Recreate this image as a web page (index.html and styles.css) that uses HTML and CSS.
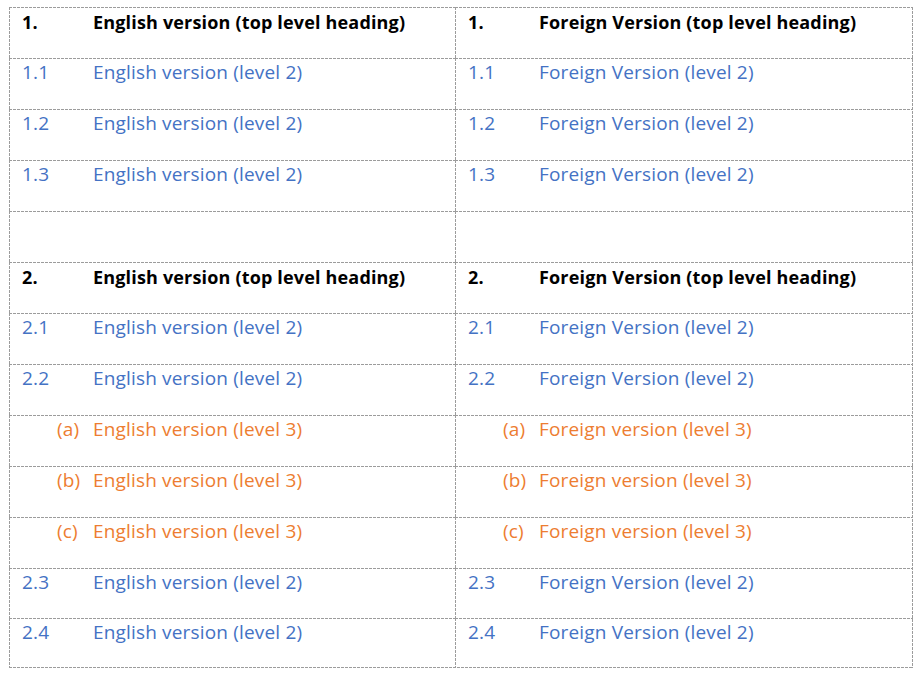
FILE: index.html
```html
<!DOCTYPE html>
<html>
<head>
<meta charset="utf-8">
<link rel="stylesheet" href="styles.css">
</head>
<body>
<table class="doc">
  <colgroup>
    <col class="col-en">
    <col class="col-fr">
  </colgroup>
  <tr class="h1">
    <td><div class="item"><span class="num">1.</span><span class="txt">English version (top level heading)</span></div></td>
    <td><div class="item"><span class="num">1.</span><span class="txt">Foreign Version (top level heading)</span></div></td>
  </tr>
  <tr class="l2">
    <td><div class="item"><span class="num">1.1</span><span class="txt">English version (level 2)</span></div></td>
    <td><div class="item"><span class="num">1.1</span><span class="txt">Foreign Version (level 2)</span></div></td>
  </tr>
  <tr class="l2">
    <td><div class="item"><span class="num">1.2</span><span class="txt">English version (level 2)</span></div></td>
    <td><div class="item"><span class="num">1.2</span><span class="txt">Foreign Version (level 2)</span></div></td>
  </tr>
  <tr class="l2">
    <td><div class="item"><span class="num">1.3</span><span class="txt">English version (level 2)</span></div></td>
    <td><div class="item"><span class="num">1.3</span><span class="txt">Foreign Version (level 2)</span></div></td>
  </tr>
  <tr class="blank">
    <td></td>
    <td></td>
  </tr>
  <tr class="h1">
    <td><div class="item"><span class="num">2.</span><span class="txt">English version (top level heading)</span></div></td>
    <td><div class="item"><span class="num">2.</span><span class="txt">Foreign Version (top level heading)</span></div></td>
  </tr>
  <tr class="l2">
    <td><div class="item"><span class="num">2.1</span><span class="txt">English version (level 2)</span></div></td>
    <td><div class="item"><span class="num">2.1</span><span class="txt">Foreign Version (level 2)</span></div></td>
  </tr>
  <tr class="l2">
    <td><div class="item"><span class="num">2.2</span><span class="txt">English version (level 2)</span></div></td>
    <td><div class="item"><span class="num">2.2</span><span class="txt">Foreign Version (level 2)</span></div></td>
  </tr>
  <tr class="l3">
    <td><div class="item"><span class="num">(a)</span><span class="txt">English version (level 3)</span></div></td>
    <td><div class="item"><span class="num">(a)</span><span class="txt">Foreign version (level 3)</span></div></td>
  </tr>
  <tr class="l3">
    <td><div class="item"><span class="num">(b)</span><span class="txt">English version (level 3)</span></div></td>
    <td><div class="item"><span class="num">(b)</span><span class="txt">Foreign version (level 3)</span></div></td>
  </tr>
  <tr class="l3">
    <td><div class="item"><span class="num">(c)</span><span class="txt">English version (level 3)</span></div></td>
    <td><div class="item"><span class="num">(c)</span><span class="txt">Foreign version (level 3)</span></div></td>
  </tr>
  <tr class="l2 short">
    <td><div class="item"><span class="num">2.3</span><span class="txt">English version (level 2)</span></div></td>
    <td><div class="item"><span class="num">2.3</span><span class="txt">Foreign Version (level 2)</span></div></td>
  </tr>
  <tr class="l2 short">
    <td><div class="item"><span class="num">2.4</span><span class="txt">English version (level 2)</span></div></td>
    <td><div class="item"><span class="num">2.4</span><span class="txt">Foreign Version (level 2)</span></div></td>
  </tr>
</table>
</body>
</html>
```
FILE: styles.css
```css
html, body {
  margin: 0;
  padding: 0;
  background: #ffffff;
}

body {
  padding: 7px 0 0 9px;
  font-family: "Open Sans", "Noto Sans", sans-serif;
}

.doc {
  border-collapse: separate;
  border-spacing: 0;
  width: 904px;
  table-layout: fixed;
  background-image:
    repeating-linear-gradient(to bottom, #9c9c9c 0 3px, transparent 3px 4px),
    repeating-linear-gradient(to right, #9c9c9c 0 3px, transparent 3px 4px);
  background-size: 1px 100%, 100% 1px;
  background-position: right top, left bottom;
  background-repeat: no-repeat;
}

.col-en {
  width: 446px;
}

.col-fr {
  width: 458px;
}

.doc td {
  height: 51px;
  padding: 2px 0 0 13px;
  vertical-align: top;
  box-sizing: border-box;
  background-image:
    repeating-linear-gradient(to right, #9c9c9c 0 3px, transparent 3px 4px),
    repeating-linear-gradient(to bottom, #9c9c9c 0 3px, transparent 3px 4px);
  background-size: 100% 1px, 1px 100%;
  background-position: left top, left top;
  background-repeat: no-repeat;
}

.doc .short td {
  height: 50px;
}

.item {
  display: flex;
  line-height: 24px;
  font-size: 19px;
  letter-spacing: 0.17px;
}

.num {
  width: 71px;
  flex: none;
}

.h1 .item {
  color: #000000;
  font-weight: 700;
  font-size: 18px;
}

.h1 td {
  padding-top: 3px;
}

.l2 .item {
  color: #4472c4;
}

.l3 .item {
  color: #ed7d31;
}

.l3 .num {
  width: 36px;
  padding-left: 35px;
}
```
